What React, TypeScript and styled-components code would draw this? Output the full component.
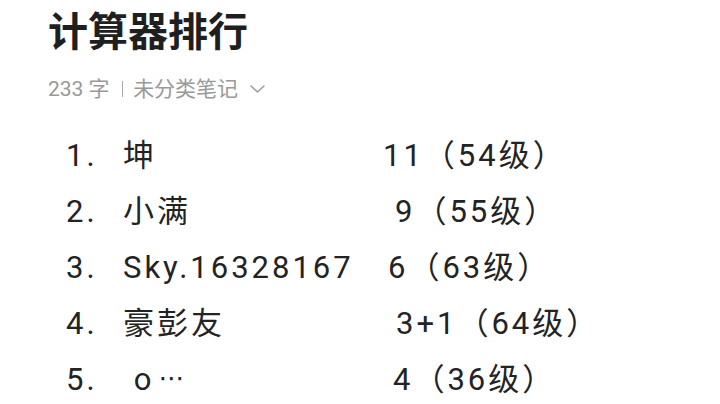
import React from "react";
import styled, { createGlobalStyle } from "styled-components";

const Global = createGlobalStyle`
  html, body { margin: 0; padding: 0; background: #ffffff; }
  body { font-family: Roboto, "Noto Sans CJK SC", sans-serif; color: #222222; }
`;

const Page = styled.div`
  width: 720px;
  height: 404px;
  overflow: hidden;
  padding: 0 0 0 48px;
  box-sizing: border-box;
`;

const Title = styled.h1`
  margin: 0;
  padding-top: 0;
  font-family: "Noto Sans CJK SC", sans-serif;
  font-size: 40px;
  font-weight: 700;
  line-height: 58px;
  color: #1f1f1f;
`;

const Meta = styled.div`
  margin-top: 18px;
  display: flex;
  align-items: center;
  font-size: 21px;
  line-height: 26px;
  color: #999999;
  font-family: Roboto, "Noto Sans CJK SC", sans-serif;
`;

const Sep = styled.span`
  width: 1.5px;
  height: 16px;
  background: #a8a8a8;
  margin: 0 10px 0 12px;
`;

const ChevronWrap = styled.span`
  display: flex;
  margin-left: 11px;
`;

const List = styled.ol`
  list-style: none;
  margin: 33px 0 0 0;
  padding: 0 0 0 18px;
  display: flex;
  flex-direction: column;
  gap: 14px;
`;

const Row = styled.li`
  display: flex;
  align-items: center;
  height: 42px;
  font-size: 31px;
  line-height: 42px;
  color: #232323;
  letter-spacing: 3px;
  white-space: pre;
`;

const Num = styled.span`
  width: 57px;
  flex: none;
`;

const Name = styled.span`
  width: 260px;
  flex: none;
`;

const Ellipsis = styled.span`
  font-family: "DejaVu Sans", sans-serif;
  font-size: 26px;
  letter-spacing: 0;
  margin-left: 4px;
  position: relative;
  top: -3px;
`;

const Score = styled.span<{ $indent: number }>`
  padding-left: ${(p) => p.$indent}px;
`;

const rows: { n: string; name: React.ReactNode; score: string; indent: number }[] = [
  { n: "1.", name: "坤", score: "11（54级）", indent: 0 },
  { n: "2.", name: "小满", score: "9（55级）", indent: 12 },
  { n: "3.", name: "Sky.16328167", score: "6（63级）", indent: 5 },
  { n: "4.", name: "豪彭友", score: "3+1（64级）", indent: 13 },
  {
    n: "5.",
    name: (
      <>
        {" o"}
        <Ellipsis>⋯</Ellipsis>
      </>
    ),
    score: "4（36级）",
    indent: 10,
  },
];

const Chevron = () => (
  <svg width="17" height="10" viewBox="0 0 17 10" fill="none" stroke="#9a9a9a" strokeWidth="1.5" strokeLinecap="round" strokeLinejoin="round">
    <path d="M2 2 L8.5 8 L15 2" />
  </svg>
);

export default function App() {
  return (
    <Page>
      <Global />
      <Title>计算器排行</Title>
      <Meta>
        <span>233 字</span>
        <Sep />
        <span>未分类笔记</span>
        <ChevronWrap>
          <Chevron />
        </ChevronWrap>
      </Meta>
      <List>
        {rows.map((r) => (
          <Row key={r.n}>
            <Num>{r.n}</Num>
            <Name>{r.name}</Name>
            <Score $indent={r.indent}>{r.score}</Score>
          </Row>
        ))}
      </List>
    </Page>
  );
}
